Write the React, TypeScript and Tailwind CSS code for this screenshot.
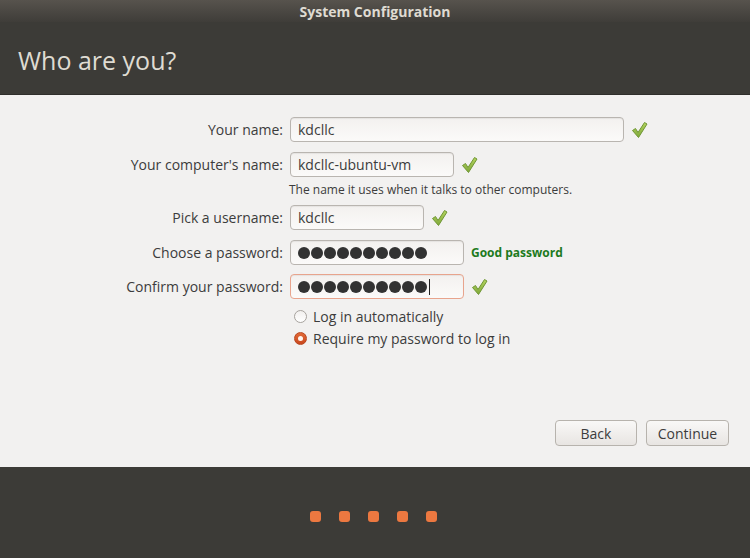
import React from 'react';

const font = { fontFamily: '"Open Sans", "DejaVu Sans", sans-serif' };

function Check() {
  return (
    <svg width="17" height="18" viewBox="0 0 17 18" className="shrink-0">
      <defs>
        <linearGradient id="chk" x1="0" y1="0" x2="0" y2="1">
          <stop offset="0" stopColor="#b4d45e" />
          <stop offset="1" stopColor="#7fa83a" />
        </linearGradient>
      </defs>
      <path
        d="M1.5 9.5 L4.5 7.5 L7 11.5 L13.5 1.5 L16 3 L7.5 16.5 Z"
        fill="url(#chk)"
        stroke="#6f9634"
        strokeWidth="1"
        strokeLinejoin="round"
      />
    </svg>
  );
}

function Field({ value, width, error }: { value: React.ReactNode; width: string; error?: boolean }) {
  return (
    <div
      className={`${width} h-[25px] rounded-[4px] border flex items-center px-[7px] text-[14px] text-[#3c3c3c] bg-gradient-to-b from-[#f3f1ef] to-[#fbfaf9] shadow-[inset_0_1px_1px_rgba(0,0,0,0.06)] ${
        error ? 'border-[#e8a48d]' : 'border-[#b9b5b0]'
      }`}
    >
      {value}
    </div>
  );
}

function Dots({ cursor }: { cursor?: boolean }) {
  return (
    <div className="flex items-center gap-[1px]">
      {[0, 1, 2, 3, 4, 5, 6, 7, 8, 9].map((i) => (
        <span key={i} className="w-[12px] h-[12px] rounded-full bg-[#323232]" />
      ))}
      {cursor && <span className="w-[1px] h-[16px] bg-[#222] ml-[1px]" />}
    </div>
  );
}

function Label({ children }: { children: React.ReactNode }) {
  return <div className="text-right text-[14px] text-[#3c3c3c] h-[25px] flex items-center justify-end">{children}</div>;
}

export default function App() {
  return (
    <div className="w-[750px] h-[558px] flex flex-col bg-[#3c3b37] overflow-hidden" style={font}>
      <div className="h-[22px] flex items-center justify-center bg-gradient-to-b from-[#57534d] to-[#3f3d39] text-[#dfdbd2] text-[14px] font-bold">
        System Configuration
      </div>
      <div className="h-[73px] flex items-center pl-[18px] pt-[5px] text-[25px] text-[#dfdbd2] border-b border-[#2f2e2b]">
        Who are you?
      </div>

      <div className="h-[372px] bg-[#f2f1f0] flex flex-col">
        <div className="grid grid-cols-[283px_auto] gap-x-[7px] mt-[22px]">
          <Label>Your name:</Label>
          <div className="flex items-center gap-[7px]">
            <Field width="w-[334px]" value="kdcllc" />
            <Check />
          </div>

          <div className="col-span-2 h-[10px]" />

          <Label>Your computer's name:</Label>
          <div className="flex items-center gap-[7px]">
            <Field width="w-[164px]" value="kdcllc-ubuntu-vm" />
            <Check />
          </div>

          <div />
          <div className="text-[12px] text-[#3c3c3c] h-[28px] pt-[4px] -ml-[1px]">
            The name it uses when it talks to other computers.
          </div>

          <Label>Pick a username:</Label>
          <div className="flex items-center gap-[7px]">
            <Field width="w-[134px]" value="kdcllc" />
            <Check />
          </div>

          <div className="col-span-2 h-[10px]" />

          <Label>Choose a password:</Label>
          <div className="flex items-center gap-[7px]">
            <Field width="w-[174px]" value={<Dots />} />
            <span className="text-[12px] font-bold text-[#1d7a1d]">Good password</span>
          </div>

          <div className="col-span-2 h-[9px]" />

          <Label>Confirm your password:</Label>
          <div className="flex items-center gap-[7px]">
            <Field width="w-[174px]" error value={<Dots cursor />} />
            <Check />
          </div>

          <div />
          <div className="flex flex-col mt-[6px] ml-[4px] text-[14px] text-[#3c3c3c]">
            <label className="flex items-center gap-[6px] h-[22px]">
              <span className="w-[13px] h-[13px] rounded-full border border-[#a7a39e] bg-gradient-to-b from-[#f2f0ee] to-[#ffffff]" />
              Log in automatically
            </label>
            <label className="flex items-center gap-[6px] h-[22px]">
              <span className="w-[13px] h-[13px] rounded-full bg-gradient-to-b from-[#e26a37] to-[#c9471d] border border-[#b8461f] flex items-center justify-center">
                <span className="w-[5px] h-[5px] rounded-full bg-[#fff6f0]" />
              </span>
              Require my password to log in
            </label>
          </div>
        </div>

        <div className="flex-1" />

        <div className="flex justify-end gap-[9px] pr-[21px] pb-[21px]">
          <button className="w-[82px] h-[26px] rounded-[4px] border border-[#b7b3ad] bg-gradient-to-b from-[#f9f8f7] to-[#e8e5e2] text-[14px] text-[#3c3c3c]">
            Back
          </button>
          <button className="w-[83px] h-[26px] rounded-[4px] border border-[#b7b3ad] bg-gradient-to-b from-[#f9f8f7] to-[#e8e5e2] text-[14px] text-[#3c3c3c]">
            Continue
          </button>
        </div>
      </div>

      <div className="flex-1 flex items-center justify-center gap-[18px] pt-[7px] pr-[4px]">
        {[0, 1, 2, 3, 4].map((i) => (
          <span key={i} className="w-[11px] h-[11px] rounded-[3px] bg-[#ec7840]" />
        ))}
      </div>
    </div>
  );
}
